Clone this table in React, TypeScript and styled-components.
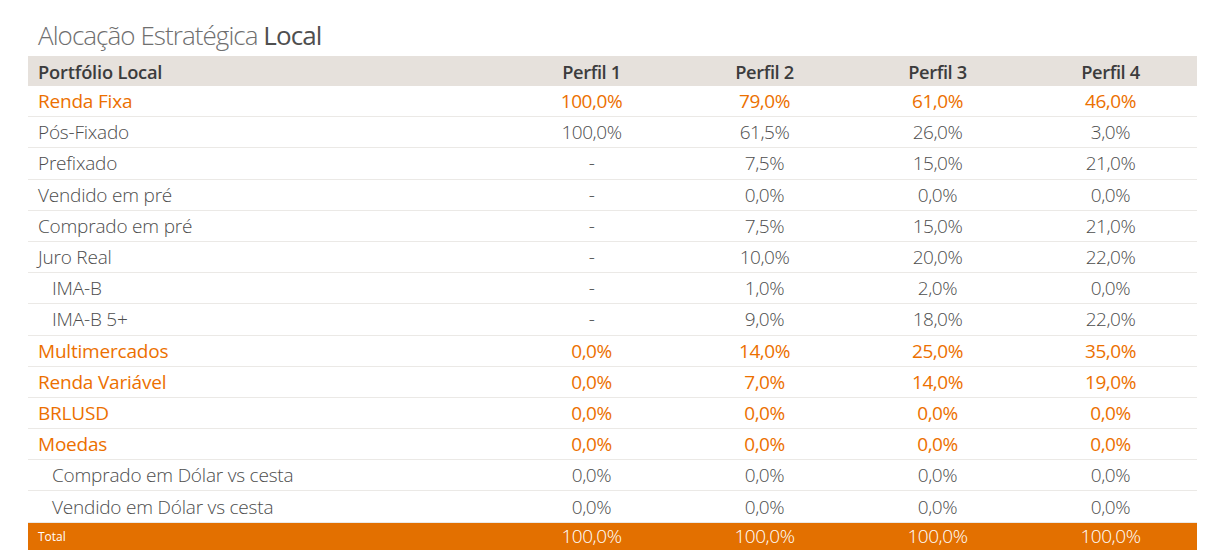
import React from "react";
import styled, { createGlobalStyle } from "styled-components";

const Global = createGlobalStyle`
  html, body { margin: 0; padding: 0; background: #ffffff; }
  body { font-family: "Open Sans", "Liberation Sans", sans-serif; }
`;

const Page = styled.div`
  width: 1215px;
  height: 559px;
  padding: 20px 18px 0 28px;
  box-sizing: border-box;
`;

const Title = styled.h1`
  margin: 0 0 6px 10px;
  height: 30px;
  font-size: 26px;
  line-height: 30px;
  font-weight: 300;
  color: #6f6f6f;
  letter-spacing: -0.95px;
  b { font-weight: 500; color: #4f4f4f; }
`;

const Table = styled.div`
  width: 1169px;
  display: flex;
  flex-direction: column;
`;

type Kind = "head" | "group" | "item" | "total";

const Row = styled.div<{ $kind: Kind }>`
  display: grid;
  grid-template-columns: 477px repeat(4, 173px);
  align-items: center;
  height: ${(p) => (p.$kind === "head" ? "30px" : p.$kind === "total" ? "27.5px" : "30.19px")};
  border-bottom: ${(p) => (p.$kind === "head" || p.$kind === "total" ? "none" : "1px solid #ebe9e6")};
  background: ${(p) => (p.$kind === "head" ? "#e6e1dc" : p.$kind === "total" ? "#e37000" : "transparent")};
  color: ${(p) =>
    p.$kind === "head" ? "#3c3c3c" : p.$kind === "group" ? "#ec7000" : p.$kind === "total" ? "#ffffff" : "#4d4d4d"};
  font-size: ${(p) => (p.$kind === "head" ? "18.3px" : "19px")};
  font-weight: ${(p) => (p.$kind === "head" ? 600 : p.$kind === "group" ? 400 : 300)};
  letter-spacing: ${(p) => (p.$kind === "head" ? "-0.4px" : "-0.45px")};
`;

const Label = styled.div<{ $indent?: boolean; $small?: boolean }>`
  padding-left: ${(p) => (p.$indent ? 24 : 10)}px;
  font-size: ${(p) => (p.$small ? "12px" : "inherit")};
  font-weight: ${(p) => (p.$small ? 400 : "inherit")};
  letter-spacing: ${(p) => (p.$small ? "0" : "-0.2px")};
  white-space: nowrap;
`;

const Cell = styled.div`
  text-align: center;
  white-space: nowrap;
`;

type R = { label: string; kind: "group" | "item"; indent?: boolean; v: string[] };

const rows: R[] = [
  { label: "Renda Fixa", kind: "group", v: ["100,0%", "79,0%", "61,0%", "46,0%"] },
  { label: "Pós-Fixado", kind: "item", v: ["100,0%", "61,5%", "26,0%", "3,0%"] },
  { label: "Prefixado", kind: "item", v: ["-", "7,5%", "15,0%", "21,0%"] },
  { label: "Vendido em pré", kind: "item", v: ["-", "0,0%", "0,0%", "0,0%"] },
  { label: "Comprado em pré", kind: "item", v: ["-", "7,5%", "15,0%", "21,0%"] },
  { label: "Juro Real", kind: "item", v: ["-", "10,0%", "20,0%", "22,0%"] },
  { label: "IMA-B", kind: "item", indent: true, v: ["-", "1,0%", "2,0%", "0,0%"] },
  { label: "IMA-B 5+", kind: "item", indent: true, v: ["-", "9,0%", "18,0%", "22,0%"] },
  { label: "Multimercados", kind: "group", v: ["0,0%", "14,0%", "25,0%", "35,0%"] },
  { label: "Renda Variável", kind: "group", v: ["0,0%", "7,0%", "14,0%", "19,0%"] },
  { label: "BRLUSD", kind: "group", v: ["0,0%", "0,0%", "0,0%", "0,0%"] },
  { label: "Moedas", kind: "group", v: ["0,0%", "0,0%", "0,0%", "0,0%"] },
  { label: "Comprado em Dólar vs cesta", kind: "item", indent: true, v: ["0,0%", "0,0%", "0,0%", "0,0%"] },
  { label: "Vendido em Dólar vs cesta", kind: "item", indent: true, v: ["0,0%", "0,0%", "0,0%", "0,0%"] },
];

export default function App() {
  return (
    <Page>
      <Global />
      <Title>
        Alocação Estratégica <b>Local</b>
      </Title>
      <Table>
        <Row $kind="head">
          <Label>Portfólio Local</Label>
          <Cell>Perfil 1</Cell>
          <Cell>Perfil 2</Cell>
          <Cell>Perfil 3</Cell>
          <Cell>Perfil 4</Cell>
        </Row>
        {rows.map((r) => (
          <Row key={r.label} $kind={r.kind}>
            <Label $indent={r.indent}>{r.label}</Label>
            {r.v.map((x, i) => (
              <Cell key={i}>{x}</Cell>
            ))}
          </Row>
        ))}
        <Row $kind="total">
          <Label $small>Total</Label>
          <Cell>100,0%</Cell>
          <Cell>100,0%</Cell>
          <Cell>100,0%</Cell>
          <Cell>100,0%</Cell>
        </Row>
      </Table>
    </Page>
  );
}
